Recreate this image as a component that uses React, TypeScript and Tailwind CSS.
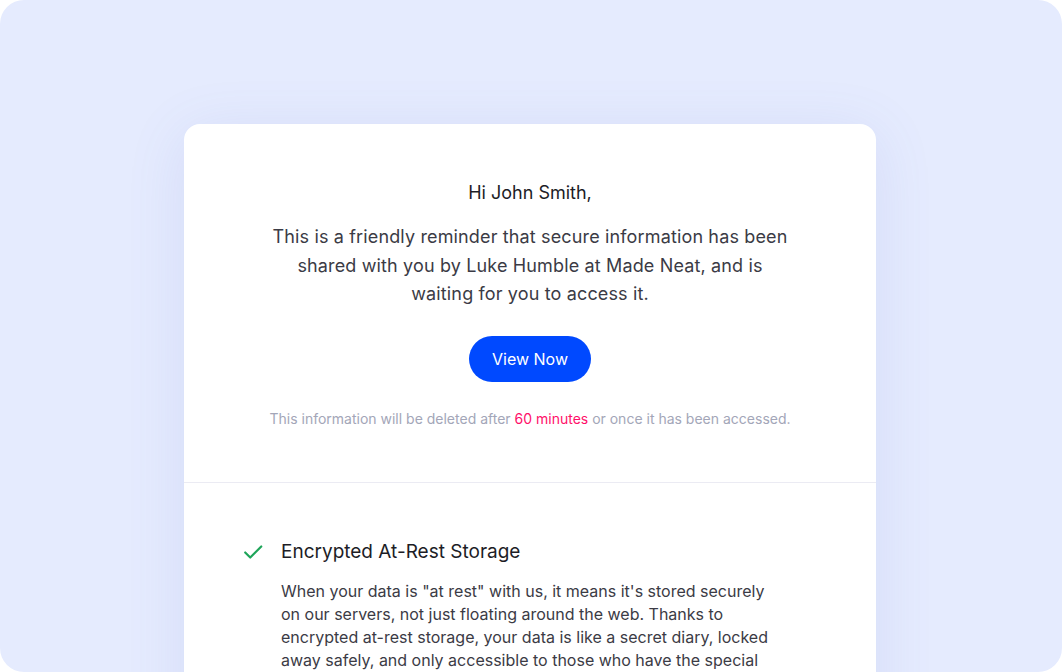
export default function App() {
  const dm = { fontFamily: 'Inter, "Noto Sans", sans-serif' }
  return (
    <div className="h-[672px] w-[1062px] overflow-hidden bg-white">
      <div className="flex h-full w-full overflow-hidden rounded-[24px] bg-[#e5ebfe] pl-[184px] pt-[124px]">
        <div className="h-[700px] w-[692px] shrink-0 rounded-[16px] bg-white shadow-[0_10px_60px_rgba(90,110,200,0.12)]">
          <div className="flex flex-col items-center pb-[53px] pt-[55px] text-center">
            <p className="text-[18px] leading-[28px] text-[#1d1d26]" style={dm}>
              Hi John Smith,
            </p>
            <p className="mt-[16px] text-[18px] leading-[28.5px] tracking-[0.008em] text-[#3b3b45]" style={dm}>
              This is a friendly reminder that secure information has been
              <br />
              shared with you by Luke Humble at Made Neat, and is
              <br />
              waiting for you to access it.
            </p>
            <button
              type="button"
              className="mt-[27px] h-[46px] w-[122px] rounded-full bg-[#0049ff] text-[16px] text-white"
              style={{ fontFamily: 'Inter, sans-serif' }}
            >
              View Now
            </button>
            <p
              className="mt-[27px] text-[14px] leading-[20px] text-[#a3a6b8]"
              style={{ fontFamily: 'Inter, sans-serif' }}
            >
              This information will be deleted after <span className="text-[#ff0f6a]">60 minutes</span> or once it
              has been accessed.
            </p>
          </div>
          <div className="h-px bg-[#ebebf3]" />
          <div className="px-[58px] pt-[55px]">
            <div className="flex items-center gap-[17px]">
              <svg width="22" height="22" viewBox="0 0 24 24" fill="none" stroke="#1fa55a" strokeWidth="2.4" strokeLinecap="round" strokeLinejoin="round">
                <path d="M3.5 12.5l5.5 5.5L21 6" />
              </svg>
              <h3 className="text-[19px] leading-[28px] text-[#1d1d26]" style={dm}>
                Encrypted At-Rest Storage
              </h3>
            </div>
            <p className="mt-[14px] pl-[39px] text-[16px] leading-[23px] text-[#3b3b45]" style={dm}>
              When your data is "at rest" with us, it means it's stored securely
              <br />
              on our servers, not just floating around the web. Thanks to
              <br />
              encrypted at-rest storage, your data is like a secret diary, locked
              <br />
              away safely, and only accessible to those who have the special
              <br />
              key to unlock it.
            </p>
          </div>
        </div>
      </div>
    </div>
  )
}
